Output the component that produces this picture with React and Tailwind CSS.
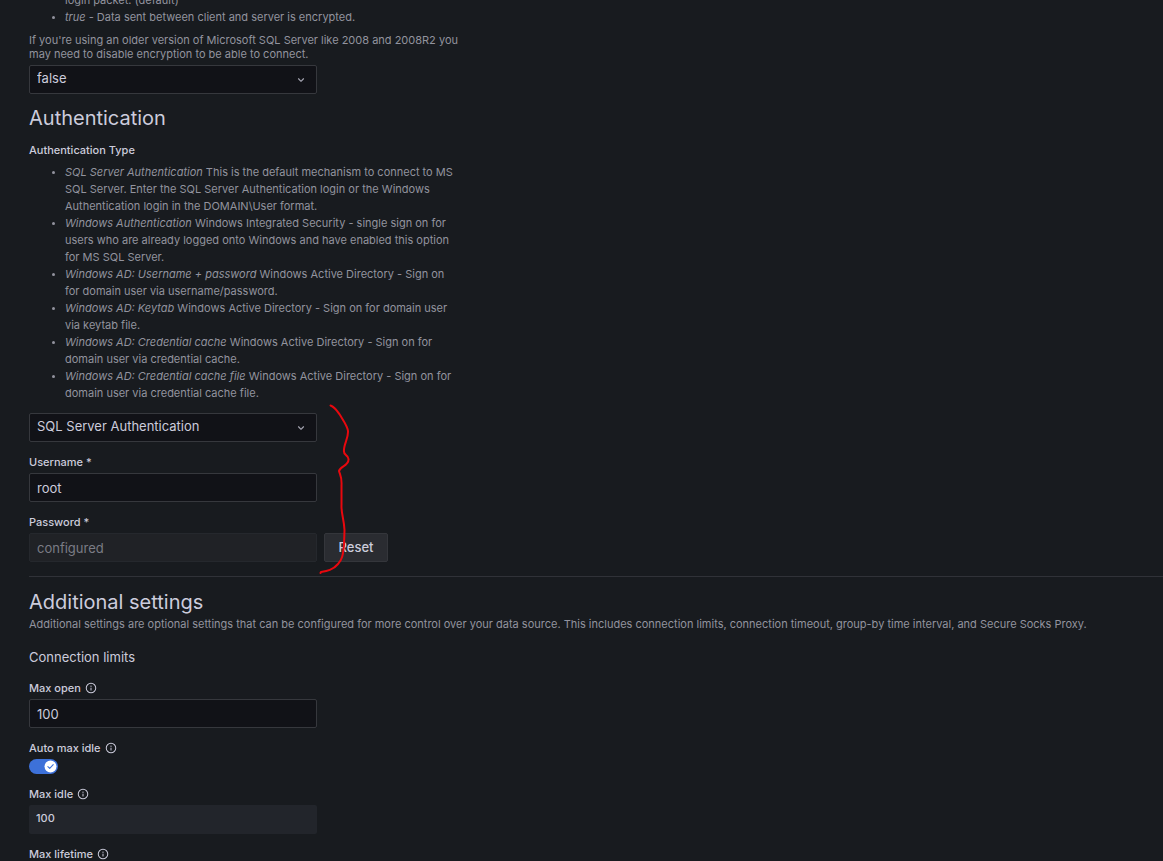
import { useState } from 'react';

const AUTH_TYPES = [
  ['SQL Server Authentication', 'This is the default mechanism to connect to MS SQL Server. Enter the SQL Server Authentication login or the Windows Authentication login in the DOMAIN\\User format.'],
  ['Windows Authentication', 'Windows Integrated Security - single sign on for users who are already logged onto Windows and have enabled this option for MS SQL Server.'],
  ['Windows AD: Username + password', 'Windows Active Directory - Sign on for domain user via username/password.'],
  ['Windows AD: Keytab', 'Windows Active Directory - Sign on for domain user via keytab file.'],
  ['Windows AD: Credential cache', 'Windows Active Directory - Sign on for domain user via credential cache.'],
  ['Windows AD: Credential cache file', 'Windows Active Directory - Sign on for domain user via credential cache file.'],
];

const FIELD = 'block h-[29px] w-full max-w-72 rounded-xs border px-[7px] text-[13px] outline-none';
const EDITABLE = 'border-[#36383d] bg-[#111217] text-[#ccccdc]';
const LIST = 'max-w-[428px] list-disc pl-9 leading-[17px] marker:text-[9px]';

function InfoIcon() {
  return (
    <svg className="size-3" viewBox="0 0 24 24" fill="currentColor" aria-hidden="true">
      <path d="M12 1.500a10.500 10.500 0 1 0 10.500 10.500A10.500 10.500 0 0 0 12 1.500Zm0 19a8.500 8.500 0 1 1 8.500-8.500 8.500 8.500 0 0 1-8.500 8.500Zm0-9.500a1 1 0 0 0-1 1v4a1 1 0 0 0 2 0v-4a1 1 0 0 0-1-1Zm0-4a1.250 1.250 0 1 0 1.250 1.250A1.250 1.250 0 0 0 12 7Z" />
    </svg>
  );
}

function Label({ htmlFor, info, children }) {
  return (
    <label htmlFor={htmlFor} className="flex items-center gap-1 text-[11px] leading-[14px] font-medium text-[#ccccdc]">
      {children}
      {info && <InfoIcon />}
    </label>
  );
}

function Select({ id, options, ...rest }) {
  return (
    <div className="relative max-w-72">
      <select id={id} className={`${FIELD} ${EDITABLE} appearance-none pb-[2px]`} {...rest}>
        {options.map((o) => (
          <option key={o}>{o}</option>
        ))}
      </select>
      <svg className="pointer-events-none absolute top-2 right-[9px] size-[14px] text-[#a5a5b2]" viewBox="0 0 24 24" fill="currentColor" aria-hidden="true">
        <path d="M17 9.17a1 1 0 0 0-1.41 0L12 12.71 8.46 9.17a1 1 0 0 0-1.41 0 1 1 0 0 0 0 1.42l4.24 4.24a1 1 0 0 0 1.42 0L17 10.59a1 1 0 0 0 0-1.42Z" />
      </svg>
    </div>
  );
}

function Heading({ children }) {
  return <h3 className="text-xl leading-6 text-[#ccccdc]">{children}</h3>;
}

export default function App() {
  const [username, setUsername] = useState('root');
  const [maxOpen, setMaxOpen] = useState('100');
  const [auto, setAuto] = useState(true);

  return (
    <main className="flex h-screen flex-col overflow-hidden bg-[#181b1f] pl-[29px] font-['Inter',sans-serif] text-[11px] text-[#92939e]">
      <div className="-mt-2 max-w-[434px] shrink-0">
        <ul className={LIST}>
          <li className="list-none">login packet. (default)</li>
          <li><i>true</i> - Data sent between client and server is encrypted.</li>
        </ul>
        <p className="mt-[7px] mb-1 leading-[14px]">
          If you're using an older version of Microsoft SQL Server like 2008 and 2008R2 you may need to disable encryption to be able to connect.
        </p>
        <Select id="encrypt" aria-label="Encrypt" options={['false', 'true', 'disable']} />
      </div>

      <section className="mt-3 shrink-0">
        <Heading>Authentication</Heading>
        <div className="mt-[13px] max-w-[434px]">
          <Label htmlFor="auth-type">Authentication Type</Label>
          <ul className={`${LIST} mt-[7px] mb-[11px]`}>
            {AUTH_TYPES.map(([name, text]) => (
              <li key={name}><i>{name}</i> {text}</li>
            ))}
          </ul>
          <div className="relative">
            <Select id="auth-type" options={AUTH_TYPES.map(([name]) => name)} />
            <div className="mt-[13px] flex flex-col gap-1">
              <Label htmlFor="username">Username *</Label>
              <input id="username" className={`${FIELD} ${EDITABLE}`} value={username} onChange={(e) => setUsername(e.target.value)} />
            </div>
            <div className="mt-[13px] flex flex-col gap-1">
              <Label htmlFor="password">Password *</Label>
              <div className="flex gap-[7px]">
                <input id="password" disabled value="configured" readOnly className={`${FIELD} border-[#25282d] bg-[#202226] text-[#7b7c85]`} />
                <button type="button" className="h-[29px] w-16 shrink-0 rounded-xs border border-[#34363b] bg-[#2a2c31] text-[13px] font-medium text-[#ccccdc]">
                  Reset
                </button>
              </div>
            </div>
            <svg className="pointer-events-none absolute -top-3 left-[287px] h-[176px] w-10" viewBox="0 0 40 176" fill="none" stroke="#e8080e" strokeWidth="2" strokeLinecap="round" strokeLinejoin="round" aria-hidden="true">
              <path d="M14.500 4.500C19 6 20.500 9 24 14C27 19 31.500 25 32 30C32.500 37 28 43 28 49C27 55 32 53 32.500 58C33 65 24 65 23 70C24 74 26 76 25.500 84L25.500 104C25 112 28 118 28.500 129L28 144C27 152 27 158 22 163C17 169 11 170 5 171L4.500 172" />
            </svg>
          </div>
        </div>
      </section>

      <hr className="mt-[14px] shrink-0 border-[#303238]" />

      <section className="mt-[13px] shrink-0">
        <Heading>Additional settings</Heading>
        <p className="mt-[3px] leading-[14px]">
          Additional settings are optional settings that can be configured for more control over your data source. This includes connection limits, connection timeout, group-by time interval, and Secure Socks Proxy.
        </p>
        <h4 className="mt-[17px] text-[13px] leading-[18px] text-[#ccccdc]">Connection limits</h4>
        <div className="mt-[15px] flex flex-col gap-[13px]">
          <div className="flex flex-col gap-1">
            <Label htmlFor="max-open" info>Max open</Label>
            <input id="max-open" inputMode="numeric" className={`${FIELD} ${EDITABLE}`} value={maxOpen} onChange={(e) => setMaxOpen(e.target.value)} />
          </div>
          <div className="flex flex-col gap-1">
            <Label htmlFor="auto-idle" info>Auto max idle</Label>
            <div className="relative h-[15px] w-[29px]">
              <input
                id="auto-idle"
                type="checkbox"
                role="switch"
                checked={auto}
                onChange={(e) => setAuto(e.target.checked)}
                className="peer block h-[15px] w-[29px] appearance-none rounded-full bg-[#36383d] checked:bg-[#3d71d9]"
              />
              <svg className="pointer-events-none absolute top-[1px] left-[2px] size-[13px] peer-checked:left-[15px]" viewBox="0 0 13 13" fill="none" aria-hidden="true">
                <circle cx="6.500" cy="6.500" r="6" fill="#fff" />
                {auto && <path d="M3.900 6.700 5.700 8.400 9.200 4.700" stroke="#3d71d9" strokeWidth="1.100" strokeLinecap="round" strokeLinejoin="round" />}
              </svg>
            </div>
          </div>
          <div className="flex flex-col gap-1">
            <Label htmlFor="max-idle" info>Max idle</Label>
            <output id="max-idle" className="h-[29px] w-full max-w-72 rounded-xs bg-[#22252b] px-[7px] text-[11px] leading-[26px] font-medium text-[#ccccdc]">
              100
            </output>
          </div>
          <Label info>Max lifetime</Label>
        </div>
      </section>
    </main>
  );
}
